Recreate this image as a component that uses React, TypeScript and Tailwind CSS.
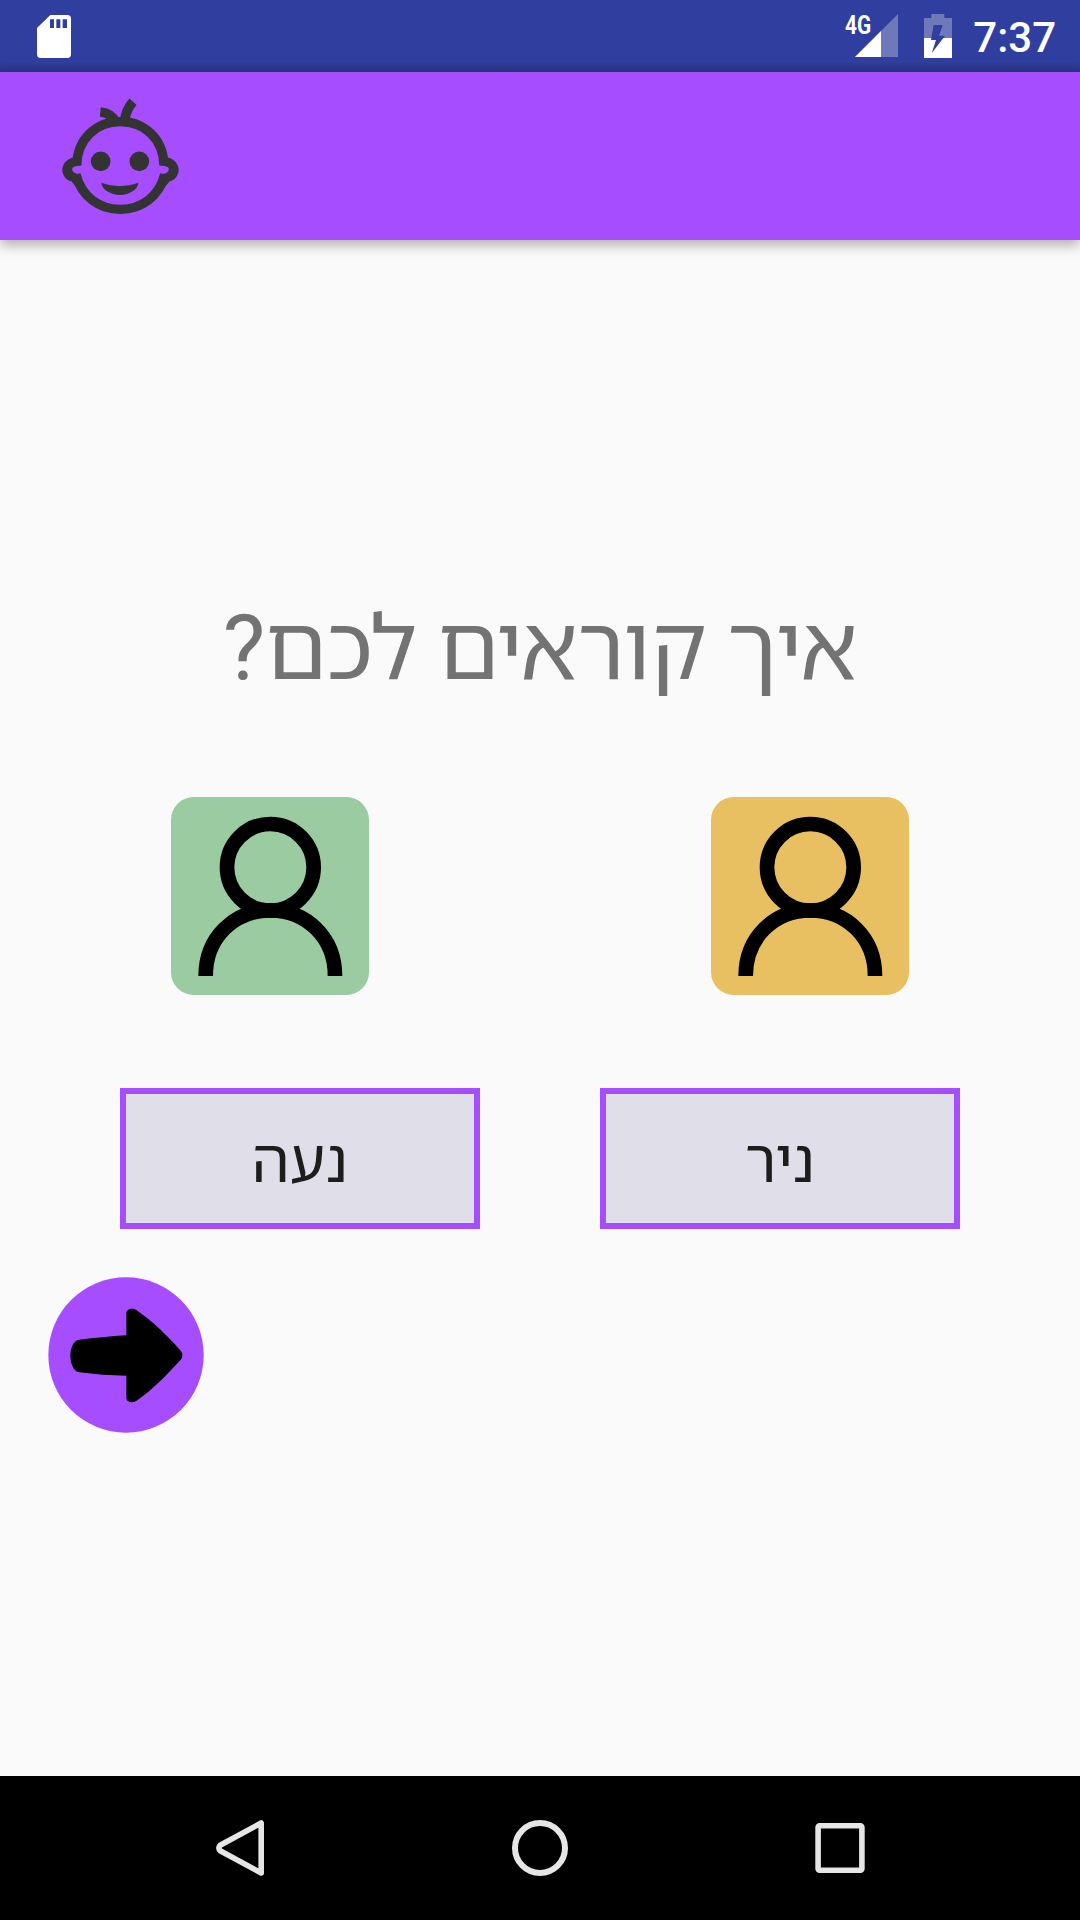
import React from "react";

function SdCard() {
  return (
    <svg width="34" height="43" viewBox="111 44 102 128" preserveAspectRatio="none">
      <path
        fill="#fff"
        fillRule="evenodd"
        d="M151 44H202Q213 44 213 55V161Q213 172 202 172H122Q111 172 111 161V83ZM150 57V83H162V57ZM169 57V83H181V57ZM188 57V83H201V57Z"
      />
    </svg>
  );
}

function Signal() {
  return (
    <svg width="43" height="43" viewBox="0 0 43 43">
      <path fill="#fff" fillOpacity="0.3" d="M43 0V43H0Z" />
      <path fill="#fff" d="M26 17V43H0Z" />
    </svg>
  );
}

function Battery() {
  return (
    <svg width="28" height="44" viewBox="309 42 84 132">
      <path
        fill="#fff"
        fillOpacity="0.3"
        fillRule="evenodd"
        d="M331 42H370V54H393V114H370L370 107H354L365 75H338L331 114H309V54H331Z"
      />
      <path
        fill="#fff"
        d="M309 114H331L330 120H345L332 160L367 114H393V174H309Z"
      />
    </svg>
  );
}

function Ear({ transform }: { transform?: string }) {
  return (
    <path
      transform={transform}
      fill="#333"
      stroke="none"
      d="M217 472C198 478 187 492 187 508C187 524 197 538 214 543L230 562L243 521C234 521 228 521 221 516Q213 508 219 501Q228 496 243 495V470Z"
    />
  );
}

function Baby() {
  return (
    <svg width="120" height="120" viewBox="180 290 360 360" fill="none" stroke="#333" strokeWidth="28">
      <path d="M230 495C232 416 288 364 361 364C434 364 490 416 492 495" />
      <path d="M228 522C243 586 296 627 361 627C426 627 479 586 494 522" />
      <Ear />
      <Ear transform="translate(723 0) scale(-1 1)" />
      <path strokeWidth="29" d="M301 335C324 337 338 345 348 366" />
      <path strokeWidth="29" d="M374 364C376 337 387 317 399 304" />
      <circle cx="302" cy="483" r="29.5" fill="#333" stroke="none" />
      <circle cx="418" cy="483" r="29.5" fill="#333" stroke="none" />
      <path
        fill="#333"
        stroke="none"
        d="M304 547C342 560 378 560 415 547C415 566 388 584 360 584C332 584 304 566 304 547Z"
      />
    </svg>
  );
}

function Avatar({ color }: { color: string }) {
  return (
    <svg width="198" height="198" viewBox="33 50 594 594" fill="none">
      <rect x="33" y="50" width="594" height="594" rx="68" fill={color} />
      <circle cx="331" cy="261" r="130" stroke="#000" strokeWidth="44" />
      <path d="M137 587C137 471 223 390 331 390C439 390 525 471 525 587" stroke="#000" strokeWidth="44" />
      <path d="M244 388L275 374H387L418 388L372 398H290Z" fill="#000" />
    </svg>
  );
}

function NextArrow() {
  return (
    <svg width="156" height="156" viewBox="54 51 468 468">
      <circle cx="288" cy="285" r="233" fill="#a64dff" />
      <path d="M289 160C289 146 309 142 322 152C368 184 412 226 452 272Q463 286 452 299C412 343 368 388 322 421C309 431 289 427 289 413V347C240 347 195 343 148 337C130 335 121 310 121 286C121 264 130 241 148 239C195 234 240 229 289 226Z" />
    </svg>
  );
}

function NameField({ name }: { name: string }) {
  return (
    <div
      dir="rtl"
      className="flex h-[141px] w-[360px] items-center justify-center border-6 border-[#a64dff] bg-[#e0dfe9] pt-[6px] text-[60px] leading-[70px] text-[#1d1d1d]"
    >
      {name}
    </div>
  );
}

export default function App() {
  return (
    <div className="flex h-[1920px] w-[1080px] flex-col overflow-hidden bg-[#fafafa] font-[Roboto,'Noto_Sans_Hebrew','Open_Sans',sans-serif]">
      <div className="flex h-[72px] items-start justify-between bg-[#303f9f] bg-linear-to-b from-[#303f9f] from-85% to-[#2a367f] pr-[24px] pl-[37px] text-white">
        <div className="pt-[14.5px]">
          <SdCard />
        </div>
        <div className="flex items-start">
          <span className="mt-[12px] w-[10.5px] origin-left scale-x-[0.8] text-[26px] leading-[26px] font-bold whitespace-nowrap">
            4G
          </span>
          <div className="mt-[14px] mr-[25.5px]">
            <Signal />
          </div>
          <div className="mt-[14px] mr-[21.6px]">
            <Battery />
          </div>
          <span className="mt-[13px] text-[42px] leading-[50px] font-medium">7:37</span>
        </div>
      </div>

      <header className="z-10 h-[168px] bg-[#a64dff] pt-[24.5px] pl-[60px] shadow-[0_5px_12px_rgba(0,0,0,0.3)]">
        <Baby />
      </header>

      <main className="flex h-[1536px] flex-col">
        <h1
          dir="rtl"
          className="mt-[349px] h-[120px] text-center text-[90px] leading-[120px] tracking-[-0.1px] text-[#737373] [word-spacing:-2.2px]"
        >
          איך קוראים לכם?
        </h1>
        <div className="mt-[88px] grid grid-cols-2 justify-items-center">
          <Avatar color="#9acba1" />
          <Avatar color="#e8c062" />
        </div>
        <div className="mt-[93px] flex justify-between px-[120px]">
          <NameField name="נעה" />
          <NameField name="ניר" />
        </div>
        <button className="mt-[48px] ml-[48px] w-[156px]">
          <NextArrow />
        </button>
      </main>

      <nav className="flex h-[144px] items-center justify-between bg-black px-[210px]">
        <svg width="60" height="60" viewBox="0 0 60 60" fill="none" stroke="#e6e6e6" strokeWidth="5.6" strokeLinejoin="round">
          <path d="M51.2 5V55L10.6 33Q7 30 10.6 27Z" />
        </svg>
        <svg width="60" height="60" viewBox="0 0 60 60" fill="none" stroke="#e6e6e6" strokeWidth="6">
          <circle cx="30" cy="30" r="25" />
        </svg>
        <svg width="60" height="60" viewBox="0 0 60 60" fill="none" stroke="#e6e6e6" strokeWidth="5.6">
          <rect x="8.1" y="7.8" width="43.8" height="44.4" rx="1.5" />
        </svg>
      </nav>
    </div>
  );
}
